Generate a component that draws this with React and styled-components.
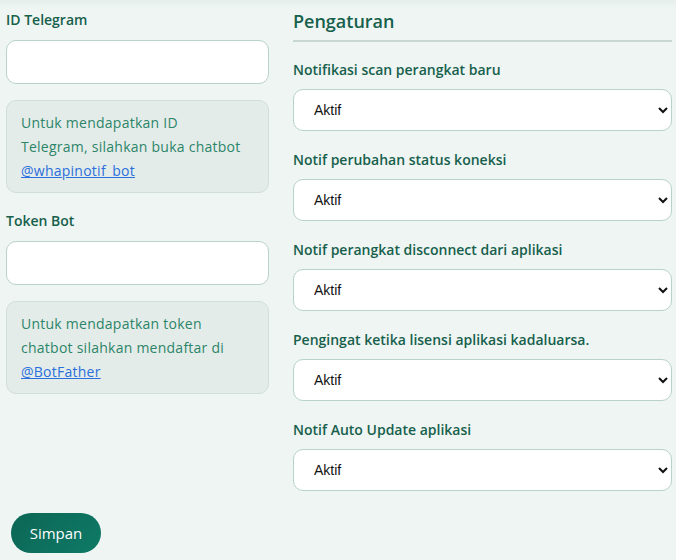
import React from "react";
import styled, { createGlobalStyle } from "styled-components";

const Global = createGlobalStyle`
  html, body { margin: 0; padding: 0; background: #eef5f3; }
  body { font-family: "Open Sans", "Noto Sans", sans-serif; font-size: 14px; }
`;

const Page = styled.div`
  width: 676px; height: 560px; box-sizing: border-box;
  padding: 10px 4px 0 6px;
  background: linear-gradient(#e6eeeb 0px, #eef5f3 8px);
  display: flex; flex-direction: column;
`;
const Columns = styled.div`
  display: grid; grid-template-columns: 263px 379px; column-gap: 24px; align-items: start;
`;
const Col = styled.div`display: flex; flex-direction: column;`;
const Label = styled.label`
  color: #17604c; font-size: 14px; font-weight: 600; line-height: 20px;
  margin-bottom: ${p => p.$mb || 10}px;
`;
const Input = styled.input`
  height: 44px; box-sizing: border-box; border: 1px solid #b9d2cb; border-radius: 10px;
  background: #fff; margin-bottom: 16px; font: inherit; padding: 0 12px;
`;
const Info = styled.div`
  background: #e4ecea; border: 1px solid #d2dedb; border-radius: 10px;
  padding: 10px 20px 9px 14px; color: #2c8568; font-size: 14px; line-height: 24px;
  letter-spacing: 0.25px;
  margin-bottom: ${p => p.$mb || 0}px;
  a { color: #2a6fdb; text-decoration: underline; }
`;
const Heading = styled.h2`
  margin: 0; font-size: 18px; font-weight: 600; color: #17604c; line-height: 22px;
  padding-bottom: 8px; border-bottom: 2px solid #cad8d4; margin-bottom: 18px;
`;
const Select = styled.select`
  height: 42px; box-sizing: border-box; border: 1px solid #b9d2cb; border-radius: 10px;
  background: #fff; font-family: "Liberation Sans", Arial, sans-serif; font-size: 14px; font-weight: 400; color: #111;
  padding: 0 14px 0 16px; margin-bottom: 19px;
  &:last-child { margin-bottom: 0; }
`;
const Button = styled.button`
  align-self: flex-start; margin: 22px 0 0 5px; width: 90px; height: 40px;
  border: none; border-radius: 20px; background: linear-gradient(135deg, #0c6655, #0e7a66);
  color: #fff; font-family: inherit; font-size: 15px; font-weight: 500;
`;

const settings = [
  "Notifikasi scan perangkat baru",
  "Notif perubahan status koneksi",
  "Notif perangkat disconnect dari aplikasi",
  "Pengingat ketika lisensi aplikasi kadaluarsa.",
  "Notif Auto Update aplikasi",
];

export default function App() {
  return (
    <Page>
      <Global />
      <Columns>
        <Col>
          <Label>ID Telegram</Label>
          <Input />
          <Info $mb={18}>
            Untuk mendapatkan ID Telegram, silahkan buka chatbot <a href="#">@whapinotif_bot</a>
          </Info>
          <Label>Token Bot</Label>
          <Input />
          <Info>
            Untuk mendapatkan token chatbot silahkan mendaftar di <a href="#">@BotFather</a>
          </Info>
        </Col>
        <Col>
          <Heading>Pengaturan</Heading>
          {settings.map(s => (
            <React.Fragment key={s}>
              <Label $mb={9}>{s}</Label>
              <Select defaultValue="Aktif"><option>Aktif</option><option>Nonaktif</option></Select>
            </React.Fragment>
          ))}
        </Col>
      </Columns>
      <Button>Simpan</Button>
    </Page>
  );
}
